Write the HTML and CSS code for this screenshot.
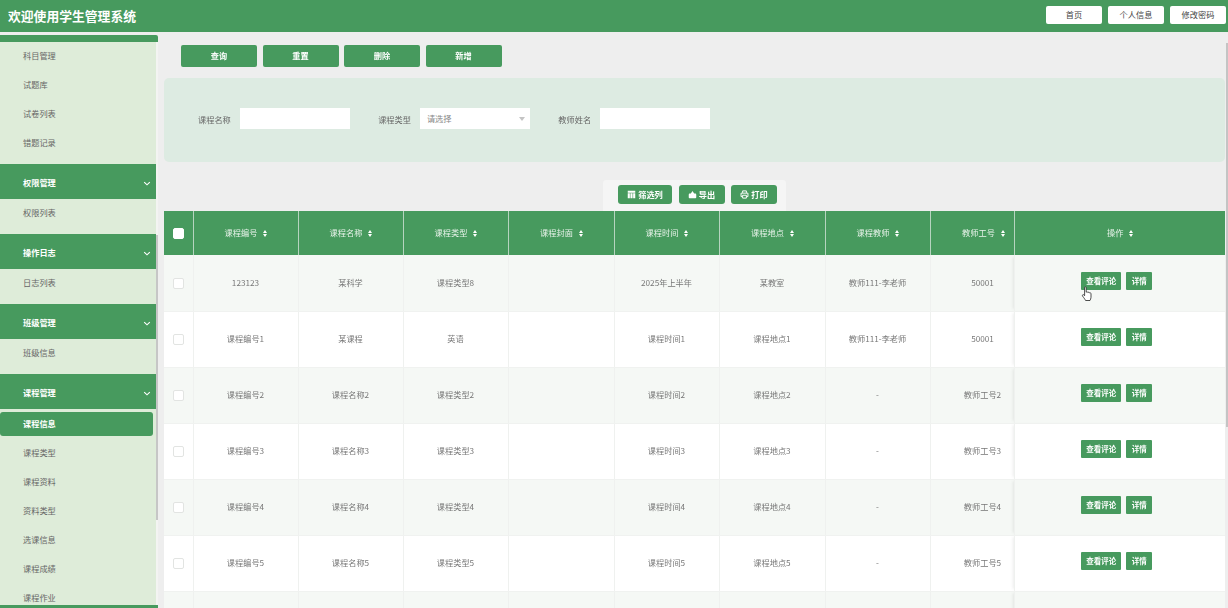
FILE: index.html
```html
<!DOCTYPE html>
<html lang="zh-CN">
<head>
  <meta charset="UTF-8">
  <title>学生管理系统</title>
  <link rel="stylesheet" href="styles.css">
</head>
<body>
  <!-- 顶部 -->
  <header class="topbar">
    <div class="site-title">欢迎使用学生管理系统</div>
    <div class="top-links">
      <a class="top-btn">首页</a>
      <a class="top-btn">个人信息</a>
      <a class="top-btn">修改密码</a>
    </div>
  </header>

  <div class="layout">
    <!-- 左侧菜单 -->
    <aside class="sidebar">
      <div class="side-strip"></div>
      <nav class="menu">
        <a class="menu-item">科目管理</a>
        <a class="menu-item">试题库</a>
        <a class="menu-item">试卷列表</a>
        <a class="menu-item">错题记录</a>
        <div class="menu-group">权限管理<svg class="chev" viewBox="0 0 10 6"><path d="M1.5 1.2 5 4.6 8.5 1.2"/></svg></div>
        <a class="menu-item">权限列表</a>
        <div class="menu-group">操作日志<svg class="chev" viewBox="0 0 10 6"><path d="M1.5 1.2 5 4.6 8.5 1.2"/></svg></div>
        <a class="menu-item">日志列表</a>
        <div class="menu-group">班级管理<svg class="chev" viewBox="0 0 10 6"><path d="M1.5 1.2 5 4.6 8.5 1.2"/></svg></div>
        <a class="menu-item">班级信息</a>
        <div class="menu-group">课程管理<svg class="chev" viewBox="0 0 10 6"><path d="M1.5 1.2 5 4.6 8.5 1.2"/></svg></div>
        <a class="menu-item active">课程信息</a>
        <a class="menu-item">课程类型</a>
        <a class="menu-item">课程资料</a>
        <a class="menu-item">资料类型</a>
        <a class="menu-item">选课信息</a>
        <a class="menu-item">课程成绩</a>
        <a class="menu-item">课程作业</a>
      </nav>
      <div class="side-strip bottom"></div>
      <div class="side-thumb"></div>
    </aside>

    <!-- 主内容 -->
    <main class="content">
      <div class="actions">
        <button class="act-btn">查询</button>
        <button class="act-btn">重置</button>
        <button class="act-btn">删除</button>
        <button class="act-btn">新增</button>
      </div>

      <div class="search-panel">
        <label class="field-label first">课程名称</label>
        <div class="text-input"></div>
        <label class="field-label">课程类型</label>
        <div class="text-input select">请选择<span class="caret"></span></div>
        <label class="field-label">教师姓名</label>
        <div class="text-input"></div>
      </div>

      <div class="toolbar-wrap">
        <div class="toolbar">
          <button class="tool-btn wide"><svg class="tool-icon" viewBox="0 0 12 12"><path d="M1 1h10v2.600H1zM1 4.400h2.800V11H1zM4.600 4.400h2.800V11H4.600zM8.200 4.400H11V11H8.200z"/></svg>筛选列</button>
          <button class="tool-btn"><svg class="tool-icon" viewBox="0 0 12 12"><path d="M6 1.200 8.200 4.800h1.300c.9 0 1.500.6 1.500 1.500v3.200c0 .8-.6 1.500-1.500 1.500h-7C1.600 11 1 10.300 1 9.500V6.300c0-.9.6-1.500 1.500-1.500h1.300z"/></svg>导出</button>
          <button class="tool-btn"><svg class="tool-icon print" viewBox="0 0 12 12"><path d="M3.500 3.800V1.200h5v2.600M3 8.800H1.400V4.200h9.200v4.600H9M3.500 7h5v3.800h-5z"/></svg>打印</button>
        </div>
      </div>

      <div class="table-box">
        <table class="data-table">
          <thead>
            <tr>
              <th class="col-check"><span class="check on"></span></th>
              <th class="col-a">课程编号<span class="sort"></span></th>
              <th class="col-a">课程名称<span class="sort"></span></th>
              <th class="col-a">课程类型<span class="sort"></span></th>
              <th class="col-b">课程封面<span class="sort"></span></th>
              <th class="col-a">课程时间<span class="sort"></span></th>
              <th class="col-b">课程地点<span class="sort"></span></th>
              <th class="col-a">课程教师<span class="sort"></span></th>
              <th class="col-c">教师工号<span class="sort"></span></th>
              <th class="col-ops">操作<span class="sort"></span></th>
            </tr>
          </thead>
          <tbody>
            <tr>
              <td><span class="check"></span></td>
              <td>123123</td><td>某科学</td><td>课程类型8</td><td></td><td>2025年上半年</td><td>某教室</td><td>教师111-李老师</td><td>50001</td>
              <td class="ops"><a class="op-btn">查看评论</a><a class="op-btn">详情</a></td>
            </tr>
            <tr>
              <td><span class="check"></span></td>
              <td>课程编号1</td><td>某课程</td><td>英语</td><td></td><td>课程时间1</td><td>课程地点1</td><td>教师111-李老师</td><td>50001</td>
              <td class="ops"><a class="op-btn">查看评论</a><a class="op-btn">详情</a></td>
            </tr>
            <tr>
              <td><span class="check"></span></td>
              <td>课程编号2</td><td>课程名称2</td><td>课程类型2</td><td></td><td>课程时间2</td><td>课程地点2</td><td>-</td><td>教师工号2</td>
              <td class="ops"><a class="op-btn">查看评论</a><a class="op-btn">详情</a></td>
            </tr>
            <tr>
              <td><span class="check"></span></td>
              <td>课程编号3</td><td>课程名称3</td><td>课程类型3</td><td></td><td>课程时间3</td><td>课程地点3</td><td>-</td><td>教师工号3</td>
              <td class="ops"><a class="op-btn">查看评论</a><a class="op-btn">详情</a></td>
            </tr>
            <tr>
              <td><span class="check"></span></td>
              <td>课程编号4</td><td>课程名称4</td><td>课程类型4</td><td></td><td>课程时间4</td><td>课程地点4</td><td>-</td><td>教师工号4</td>
              <td class="ops"><a class="op-btn">查看评论</a><a class="op-btn">详情</a></td>
            </tr>
            <tr>
              <td><span class="check"></span></td>
              <td>课程编号5</td><td>课程名称5</td><td>课程类型5</td><td></td><td>课程时间5</td><td>课程地点5</td><td>-</td><td>教师工号5</td>
              <td class="ops"><a class="op-btn">查看评论</a><a class="op-btn">详情</a></td>
            </tr>
            <tr class="last-row">
              <td></td><td></td><td></td><td></td><td></td><td></td><td></td><td></td><td></td><td class="ops"></td>
            </tr>
          </tbody>
        </table>
      </div>
      <div class="page-thumb"></div>
    </main>
  </div>

  <!-- 鼠标手形 -->
  <svg class="hand" viewBox="0 0 12 16"><path d="M3.600 1.600c0-1 1.600-1 1.600 0v4.600c.5-.5 1.500-.4 1.700.3.500-.4 1.400-.3 1.600.4.600-.3 1.500 0 1.500.8v3.600c0 1.500-.7 2.300-1 3.200H4.600c-.5-1-1.500-2.400-3-4.400-.7-1 .5-2 1.300-1.200l.7.800z"/></svg>
</body>
</html>
```

FILE: styles.css
```css
* {
  box-sizing: border-box;
}
html, body {
  height: 100%;
}
body {
  margin: 0;
  overflow: hidden;
  background: #eeeeee;
  font-family: "Noto Sans CJK SC", "Liberation Sans", sans-serif;
  font-size: 8.2px;
  color: #666;
  filter: blur(0.4px);
}

/* 顶部 */
.topbar {
  height: 32px;
  padding: 0 2px 0 8px;
  background: #479a5e;
  display: flex;
  align-items: center;
  justify-content: space-between;
}
.site-title {
  font-size: 12.8px;
  font-weight: 700;
  color: #fff;
  margin-top: -2px;
}
.top-links {
  display: flex;
  gap: 6px;
  margin-top: -3px;
}
.top-btn {
  width: 56px;
  height: 18px;
  line-height: 17px;
  text-align: center;
  background: #fff;
  border-radius: 2px;
  color: #444;
}

.layout {
  display: flex;
  height: 576px;
}

/* 左侧菜单 */
.sidebar {
  width: 158px;
  flex: none;
  margin-top: 3px;
  height: 573px;
  position: relative;
  display: flex;
  flex-direction: column;
  background: #f3f4f2;
}
.side-strip {
  height: 7px;
  flex: none;
  background: #479a5e;
  border-radius: 0 2px 0 0;
}
.side-strip.bottom {
  height: 3px;
  border-radius: 0;
}
.side-thumb {
  position: absolute;
  right: 0;
  top: 200px;
  width: 2px;
  height: 285px;
  background: #c6c6c6;
}
.menu {
  flex: 1;
  width: 156px;
  overflow: hidden;
  background: #deecd9;
  display: flex;
  flex-direction: column;
}
.menu-item {
  flex: none;
  height: 29px;
  line-height: 27px;
  padding-left: 23px;
  color: #666;
}
.menu-item.active {
  height: 24px;
  line-height: 22px;
  margin: 3px 3px 3px 0;
  background: #479a5e;
  color: #fff;
  font-weight: 700;
  border-radius: 3px;
}
.menu-group {
  flex: none;
  height: 35px;
  margin-top: 6px;
  padding: 0 5px 0 23px;
  background: #479a5e;
  color: #fff;
  font-weight: 700;
  display: flex;
  align-items: center;
  justify-content: space-between;
}
.chev {
  width: 8px;
  height: 5px;
  margin-top: 3px;
  fill: none;
  stroke: #fff;
  stroke-width: 1.4;
}

/* 主内容 */
.content {
  flex: 1;
  min-width: 0;
  position: relative;
  padding: 13px 3px 0 6px;
}
.actions {
  display: flex;
  gap: 5.500px;
  padding-left: 17px;
}
.act-btn {
  width: 76px;
  height: 22px;
  padding: 0 0 2px;
  border: 0;
  border-radius: 2px;
  background: #479a5e;
  color: #fff;
  font: 700 8.2px "Noto Sans CJK SC", sans-serif;
}

.search-panel {
  height: 84px;
  margin-top: 11px;
  padding: 0 0 3px 34px;
  background: #ddebe2;
  border-radius: 5px;
  display: flex;
  align-items: center;
}
.field-label {
  margin: 0 9px 0 28.400px;
  color: #666;
}
.field-label.first {
  margin-left: 0;
}
.text-input {
  width: 110px;
  height: 21px;
  background: #fff;
  position: relative;
}
.text-input.select {
  line-height: 20px;
  padding-left: 7px;
  color: #888;
}
.caret {
  position: absolute;
  right: 5px;
  top: 9px;
  border: 3px solid transparent;
  border-top: 4px solid #c4c4c4;
}

.toolbar-wrap {
  display: flex;
  height: 49px;
  padding: 18px 0 0 439px;
}
.toolbar {
  width: 183px;
  height: 31px;
  padding: 5px 0 0 15px;
  background: #f5f5f5;
  border-radius: 3px 3px 0 0;
  display: flex;
  gap: 6.500px;
}
.tool-btn {
  width: 46px;
  height: 19px;
  padding: 0 0 2px;
  border: 0;
  border-radius: 3px;
  background: #479a5e;
  color: #fff;
  font: 700 8.200px "Noto Sans CJK SC", sans-serif;
  display: flex;
  align-items: center;
  justify-content: center;
  gap: 2px;
}
.tool-btn.wide {
  width: 54px;
}
.tool-icon {
  width: 9px;
  height: 9px;
  margin-top: 2px;
  fill: #fff;
}
.tool-icon.print {
  fill: none;
  stroke: #fff;
  stroke-width: 1.300;
}

/* 表格 */
.data-table {
  width: 1061px;
  border-collapse: collapse;
  table-layout: fixed;
}
.col-check {
  width: 29px;
}
.col-a {
  width: 105px;
}
.col-b {
  width: 106px;
}
.col-c {
  width: 84px;
}
.col-ops {
  width: 211px;
}
.data-table th {
  height: 44px;
  padding: 0 0 2px 2px;
  background: #479a5e;
  border-left: 1px solid #b6d4bf;
  color: #e8f3ea;
  font-weight: 400;
  text-align: center;
  white-space: nowrap;
}
.data-table th:first-child {
  border-left: 0;
  padding-left: 0;
}
.data-table th:nth-child(9) {
  padding-left: 24px;
}
.sort {
  display: inline-block;
  position: relative;
  width: 5px;
  height: 7px;
  margin-left: 6px;
  vertical-align: -1px;
}
.sort::before, .sort::after {
  content: "";
  position: absolute;
  left: 0;
  border-left: 2.500px solid transparent;
  border-right: 2.500px solid transparent;
}
.sort::before {
  top: 0;
  border-bottom: 3px solid #fff;
}
.sort::after {
  bottom: 0;
  border-top: 3px solid #fff;
}
.data-table td {
  height: 56px;
  padding: 0 0 2px;
  border-left: 1px solid #eff1ef;
  border-bottom: 1px solid #f0f2f0;
  background: #fff;
  text-align: center;
  color: #777;
  white-space: nowrap;
}
.data-table td:first-child {
  border-left: 0;
}
.data-table tbody tr:nth-child(odd) td {
  background: #f5f8f5;
}
.data-table td:nth-child(9) {
  padding-left: 21px;
}
.data-table td.ops {
  box-shadow: -3px 0 3px -2px rgba(0, 0, 0, 0.08);
  padding: 0 6px 4px 0;
}
.check {
  display: inline-block;
  width: 11px;
  height: 11px;
  margin-top: 2px;
  vertical-align: middle;
  background: #fff;
  border: 1px solid #e2e4e2;
  border-radius: 2px;
}
.check.on {
  border-color: #fff;
}
.op-btn {
  display: inline-block;
  width: 40px;
  height: 18px;
  line-height: 17px;
  background: #479a5e;
  color: #fff;
  font-weight: 700;
  font-size: 7.500px;
  border-radius: 1px;
}
.op-btn + .op-btn {
  width: 26px;
  margin-left: 5px;
}

.page-thumb {
  position: absolute;
  right: 0;
  top: 11px;
  height: 384px;
  width: 2px;
  background: #c4c4c4;
}
.hand {
  position: absolute;
  left: 1081px;
  top: 286px;
  width: 12px;
  height: 16px;
  fill: #fff;
  stroke: #222;
  stroke-width: 0.8;
}
```
